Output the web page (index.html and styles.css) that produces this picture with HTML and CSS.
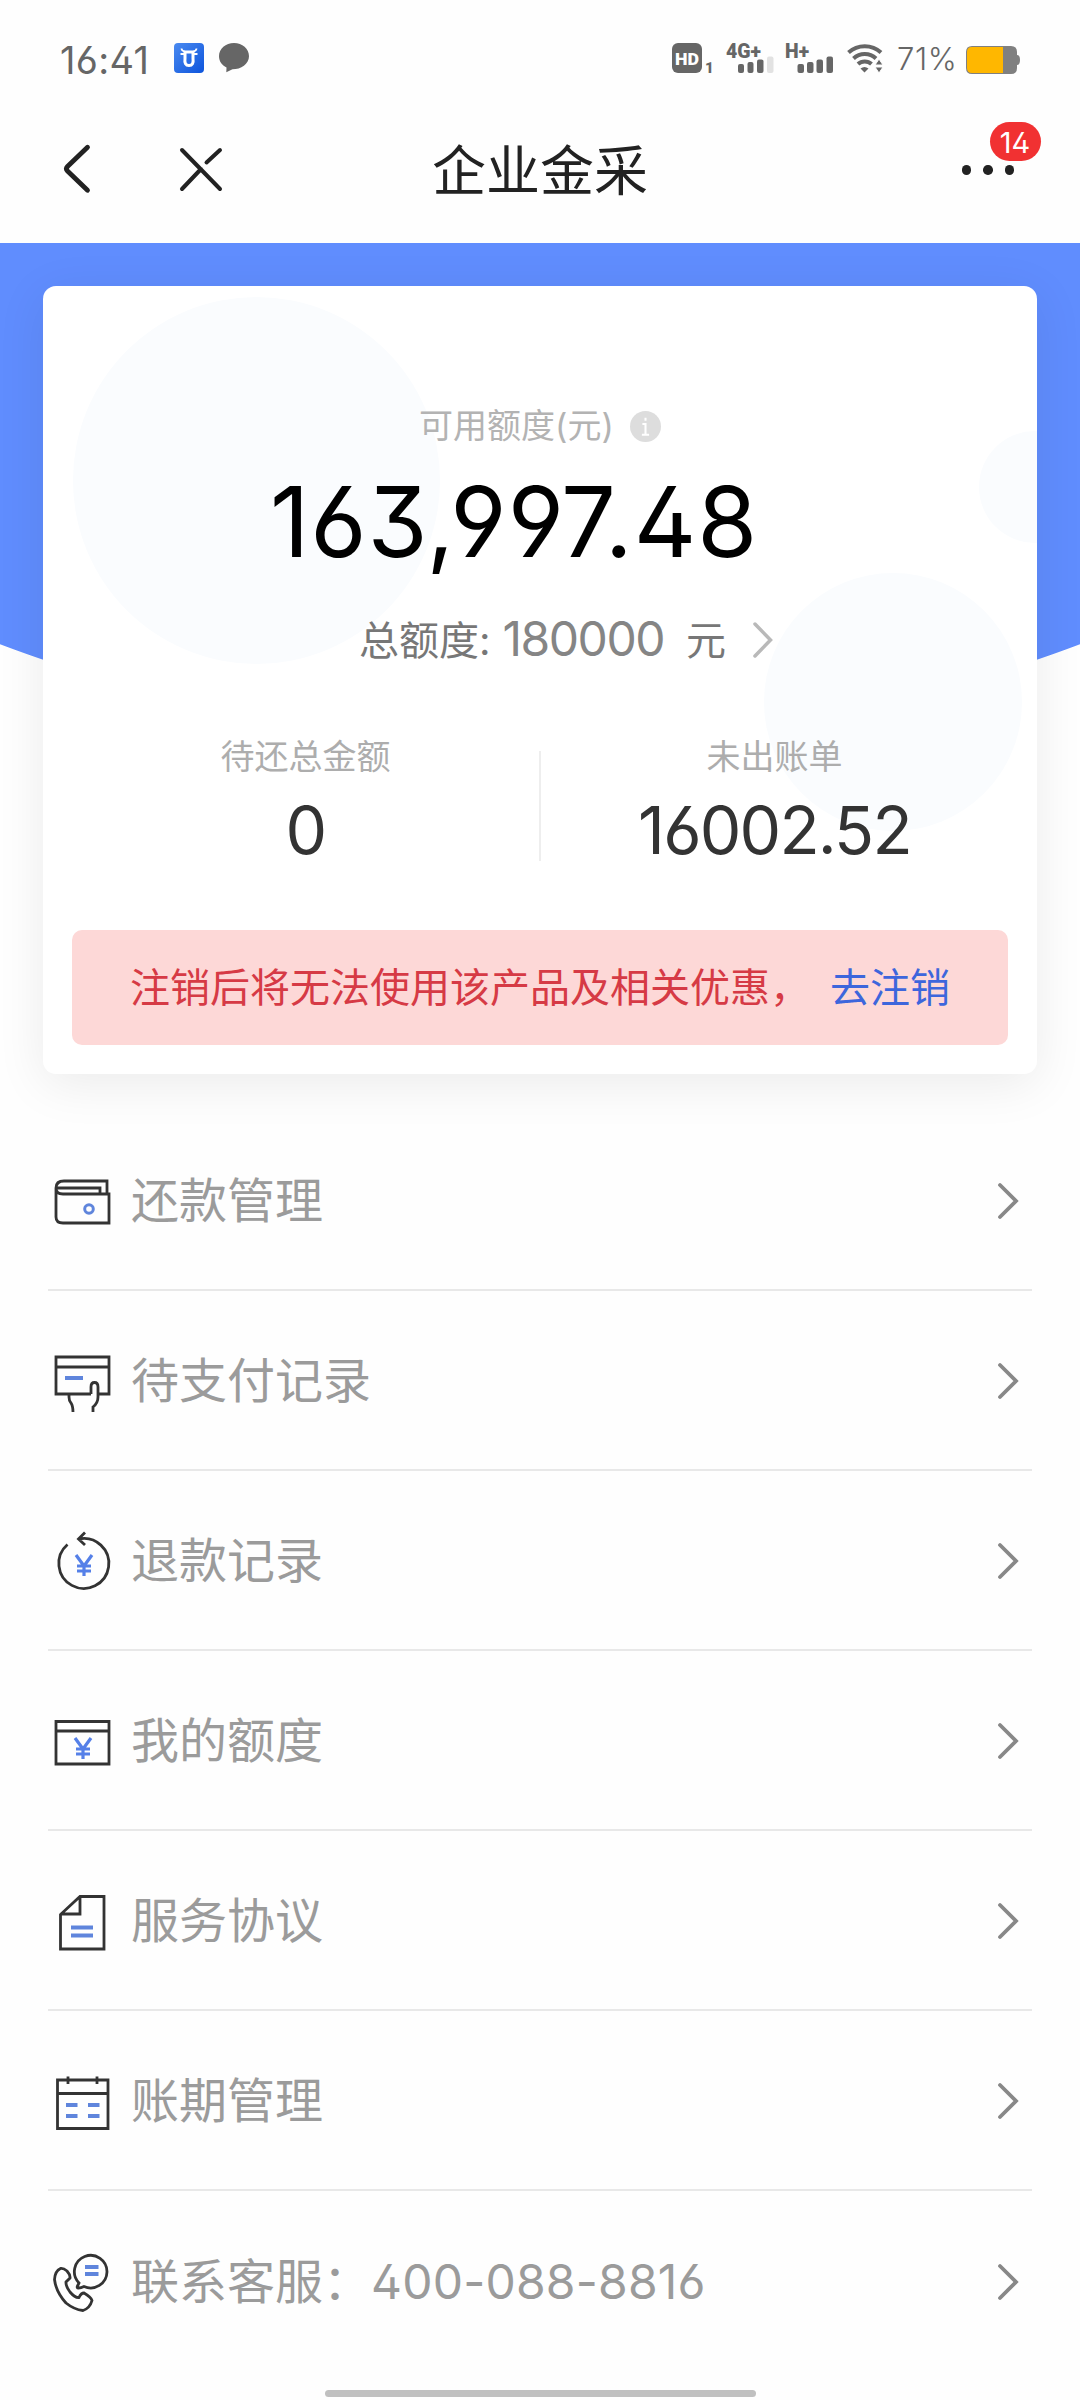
FILE: index.html
```html
<!DOCTYPE html>
<html lang="zh-CN">
<head>
<meta charset="utf-8">
<title>企业金采</title>
<link rel="stylesheet" href="styles.css">
</head>
<body>
<header>
  <div class="status">
    <span class="time">16:41</span>
    <svg class="app" width="30" height="30" viewBox="0 0 30 30">
      <defs><linearGradient id="g" x1="0" y1="0" x2="1" y2="1"><stop offset="0" stop-color="#4a8af0"/><stop offset="1" stop-color="#0d54dc"/></linearGradient></defs>
      <rect width="30" height="30" rx="4" fill="url(#g)"/>
      <path d="M11 9h8v6.500q1 7-4 7t-4-7z" fill="none" stroke="#fff" stroke-width="3"/>
      <path d="M7.500 5.500q.3 2.500 3 3M22.500 5.500q-.3 2.500-3 3M6.500 11h4M23.500 11h-4" stroke="#fff" stroke-width="1.800" fill="none"/>
    </svg>
    <svg class="bubble" width="30" height="30" viewBox="0 0 30 30"><path d="M15 0C6.700 0 0 5.800 0 13.200c0 5 3 9 7.500 11.300L7.300 29.300l6.200-3c8.500 0 16.500-5.300 16.500-13.100C30 5.800 23.300 0 15 0z" fill="#666"/></svg>
    <div class="signals">
      <svg width="41" height="30" viewBox="0 0 41 30"><rect width="30" height="30" rx="6" fill="#666"/><text class="tag" x="3" y="21.500" font-size="17" fill="#fff" textLength="24" lengthAdjust="spacingAndGlyphs">HD</text><text class="tag" x="33" y="29.500" font-size="15" fill="#666">1</text></svg>
      <svg class="g4" width="48" height="30" viewBox="0 0 48 30"><text class="tag" x="0" y="14.500" font-size="20" fill="#666" textLength="35" lengthAdjust="spacingAndGlyphs">4G+</text><g fill="#666"><rect x="12" y="21" width="6" height="9" rx="2"/><rect x="21.500" y="19" width="6" height="11" rx="2"/><rect x="31" y="16.500" width="6.500" height="13.500" rx="2"/><rect x="41" y="13.500" width="6.500" height="16.500" rx="2" fill="#e2e2e2"/></g></svg>
      <svg class="hp" width="48" height="30" viewBox="0 0 48 30"><text class="tag" x="0" y="14.500" font-size="20" fill="#666" textLength="24" lengthAdjust="spacingAndGlyphs">H+</text><g fill="#666"><rect x="12.500" y="21" width="6.500" height="9" rx="2"/><rect x="22" y="19" width="6.500" height="11" rx="2"/><rect x="31.500" y="16.500" width="6.500" height="13.500" rx="2"/><rect x="41.500" y="13.500" width="6.500" height="16.500" rx="2"/></g></svg>
      <svg class="wifi" width="36" height="30" viewBox="0 0 36 30"><g fill="none" stroke="#666" stroke-width="4"><path d="M1.500 9.500a24 24 0 0 1 32.500 0M6.500 15.500a16.500 16.500 0 0 1 22.500 0M11 21a10 10 0 0 1 13.500 0"/></g><path d="M13.500 25.500q4-3 8 0l-4 4z" fill="#666"/><path d="M32 16l4 6h-8zM32 30l4-6h-8z" fill="#666" stroke="#fefefe" stroke-width="1"/></svg>
      <span class="pct">71%</span>
      <svg class="batt" width="54" height="28" viewBox="0 0 54 28"><path d="M6 0h39q6 0 6 6v3q3 0 3 5t-3 5v3q0 6-6 6H6q-6 0-6-6V6q0-6 6-6z" fill="#808080"/><path d="M6 1h31v26H6q-5 0-5-5V6q0-5 5-5z" fill="#ffb700"/></svg>
    </div>
  </div>
  <nav class="nav">
    <svg class="back" width="26" height="50" viewBox="0 0 26 50"><path d="M23.500 3.200L3.500 22.500q-2.200 2.300 0 4.600l20 19.200" fill="none" stroke="#222" stroke-width="4.800" stroke-linecap="round"/></svg>
    <svg class="close" width="44" height="44" viewBox="0 0 44 44"><path d="M3 3l38 39M3 42l19-20M27.500 15.500L41 3" fill="none" stroke="#222" stroke-width="4" stroke-linecap="round"/></svg>
    <h1>企业金采</h1>
    <div class="more"><i></i><i></i><i></i><b>14</b></div>
  </nav>
</header>
<main>
  <section class="hero">
    <div class="card">
      <div class="bubbles"><i class="c1"></i><i class="c2"></i><i class="c3"></i></div>
      <div class="caption"><span>可用额度(元)</span><svg width="31" height="31" viewBox="0 0 30 30"><circle cx="15" cy="15" r="15" fill="#ddd"/><path d="M15 6.500v3M12 12.500h3v10M11.500 23h7" stroke="#fff" stroke-width="2" fill="none"/></svg></div>
      <div class="amount">163,997.48</div>
      <div class="total"><span>总额度:</span><span class="limit">180000</span><span class="unit">元</span><svg width="20" height="36" viewBox="0 0 20 36"><path d="M2 2l15.500 16L2 34" fill="none" stroke="#b9b9b9" stroke-width="3.500" stroke-linecap="round"/></svg></div>
      <div class="split">
        <div><span>待还总金额</span><strong>0</strong></div>
        <div><span>未出账单</span><strong>16002.52</strong></div>
      </div>
      <div class="notice"><span>注销后将无法使用该产品及相关优惠，</span><a>去注销</a></div>
    </div>
  </section>
  <ul class="menu">
    <li><svg class="ico" viewBox="0 0 64 64"><path d="M6 19v29q0 6 7 6h46V25H13q-7 0-7-6 0-7 8-7h43v12M7 19h43v5"/><circle class="blue ring" cx="39" cy="40" r="4.300"/></svg><span>还款管理</span><svg class="arrow" viewBox="0 0 22 38"><path d="M3 3l16 16L3 35"/></svg></li>
    <li><svg class="ico" viewBox="0 0 64 64"><path d="M41 45H6V8h53v37H48M6 18h53M19 45v3q0 4 2 6 2 3 2 9M43 63v-5q5-4 5-10V38q0-4.500-3.500-4.500T41 38v7"/><path class="blue" d="M15 29h18"/></svg><span>待支付记录</span><svg class="arrow" viewBox="0 0 22 38"><path d="M3 3l16 16L3 35"/></svg></li>
    <li><svg class="ico" viewBox="0 0 64 64"><path d="M17.500 15.500a25 25 0 1 0 11-5.500M35 3.500L28.500 10l6.500 6"/><path class="blue yen" d="M26 26l8 11 8-11M34 37v10M27 37h14M27 42h14"/></svg><span>退款记录</span><svg class="arrow" viewBox="0 0 22 38"><path d="M3 3l16 16L3 35"/></svg></li>
    <li><svg class="ico" viewBox="0 0 64 64"><path d="M6 12.500h53V55H6zM6 22h53"/><path class="blue yen" d="M25 29l8 11 8-11M33 40v10M26 40h14M26 45h14"/></svg><span>我的额度</span><svg class="arrow" viewBox="0 0 22 38"><path d="M3 3l16 16L3 35"/></svg></li>
    <li><svg class="ico" viewBox="0 0 64 64"><path d="M30 7.500h24V60H10.500V25.500zv17.500H10.500"/><path class="blue" d="M21 38.500h22M21 46.500h22"/></svg><span>服务协议</span><svg class="arrow" viewBox="0 0 22 38"><path d="M3 3l16 16L3 35"/></svg></li>
    <li><svg class="ico" viewBox="0 0 64 64"><path d="M7.500 11h50.500v48.500H7.500zM7.500 24.500H58M18 7.500v7.500M47 7.500v7.500"/><path class="blue" d="M16 36h11.500M38 36h11.500M16 47h11.500M38 47h11.500"/></svg><span>账期管理</span><svg class="arrow" viewBox="0 0 22 38"><path d="M3 3l16 16L3 35"/></svg></li>
    <li><svg class="ico" viewBox="0 0 64 64"><path d="M28.500 38q-2 0-1-2l1.500-3A16.300 16.300 0 1 1 34 36.500q-3 1.500-5.500 1.500z"/><path d="M10.500 18.500Q5 21 4.500 29.500 6 42 16 53q8 6.500 17 7.500 7-2.500 9-10-.5-3-8-7.500-3 0-5 4.500-4 .5-9-5.500-4.500-6-4-10l4-4q.5-3-3-7-3.500-3-6.500-2.500z"/><path class="blue" d="M35 17h13.500M35 24h13.500"/></svg><span>联系客服：<em>400-088-8816</em></span><svg class="arrow" viewBox="0 0 22 38"><path d="M3 3l16 16L3 35"/></svg></li>
  </ul>
</main>
<footer><div class="home"></div></footer>
</body>
</html>
```
FILE: styles.css
```css
* { box-sizing: border-box; margin: 0; padding: 0; }
body {
  width: 1080px; height: 2400px; overflow: hidden;
  display: flex; flex-direction: column;
  background: #fefefe;
  font-family: Inter, "Noto Sans CJK SC", sans-serif;
  font-feature-settings: "ss01";
}
svg, i, b { display: block; flex: none; overflow: visible; }
i, em { font-style: normal; }
span { white-space: nowrap; }
header { height: 243px; }

.status { height: 116px; padding: 0 60px 0 60px; display: flex; align-items: center; color: #666; }
.time { width: 114px; font-size: 38px; letter-spacing: .3px; line-height: 40px; padding-top: 4px; }
.bubble { margin-left: 15px; }
.signals { margin-left: auto; display: flex; align-items: center; }
.tag { font-family: Roboto, sans-serif; font-weight: 900; }
.g4 { margin-left: 13px; }
.hp { margin-left: 11px; }
.wifi { margin-left: 14px; }
.pct { width: 69px; margin-left: 14px; font-size: 31px; font-weight: 300; line-height: 40px; padding-top: 2px; letter-spacing: .6px; }
.batt { margin-top: 3px; }

.nav { height: 108px; padding: 0 66px 0 64px; display: flex; align-items: center; }
.close { margin-left: 89px; }
.back, .close { margin-bottom: 2px; }
h1 { width: 216px; margin-left: 209px; padding-top: 3px; font-size: 54px; font-weight: 400; line-height: 64px; color: #222; white-space: nowrap; }
.more { position: relative; margin-left: auto; display: flex; gap: 12px; }
.more i { width: 9.500px; height: 9.500px; border-radius: 50%; background: #222; }
.more b {
  position: absolute; left: 28px; top: -43px; width: 51px; height: 39px; border-radius: 20px;
  background: #f13132; color: #fff; font-size: 29px; font-weight: 400; line-height: 41px; text-align: center;
}

.hero {
  height: 866px; padding: 43px 43px 0;
  background: radial-gradient(ellipse 1200px 900px at 540px -402px, #608dfe 99.900%, transparent 100%);
}
.card {
  position: relative; height: 788px; padding: 116px 29px 29px; border-radius: 13px;
  background: #fff; box-shadow: 0 10px 50px rgba(0, 0, 0, .08);
  display: flex; flex-direction: column;
}
.bubbles { position: absolute; inset: 0; overflow: hidden; border-radius: 13px; }
.bubbles i { position: absolute; border-radius: 50%; background: #fafcfe; }
.bubbles .c1 { left: 30px; top: 11px; width: 367px; height: 367px; }
.bubbles .c2 { left: 721px; top: 287px; width: 258px; height: 258px; }
.bubbles .c3 { left: 936px; top: 145px; width: 112px; height: 112px; }
.caption, .amount, .total, .split, .notice { position: relative; display: flex; align-items: center; justify-content: center; }
.caption { height: 48px; gap: 16px; font-size: 34px; color: #b3b3b3; }
.caption span { padding-bottom: 5px; }
.amount { height: 100px; margin-top: 22px; padding-right: 52px; font-size: 97px; font-weight: 400; line-height: 100px; letter-spacing: .9px; color: #000; }
.total { height: 48px; margin-top: 44px; padding-left: 52px; font-size: 40px; color: #777; }
.total span { padding-bottom: 4px; }
.limit { margin-left: 12px; font-size: 48px; letter-spacing: -1.500px; color: #858585; }
.unit { margin: 0 27px 0 22px; }
.split { margin-top: 69px; align-items: stretch; }
.split div { flex: 1; display: flex; flex-direction: column; align-items: center; }
.split div + div { border-left: 2px solid #eee; margin: 18px 0 6px; }
.split div + div span { margin-top: -18px; }
.split span { font-size: 34px; line-height: 48px; color: #adadad; }
.split strong { margin-top: 14px; margin-bottom: -4px; font-size: 66px; font-weight: 400; line-height: 70px; letter-spacing: -1.800px; color: #333; }
.notice { height: 115px; margin-top: auto; padding-bottom: 5px; border-radius: 10px; background: #fdd8d7; font-size: 40px; color: #d63a45; }
.notice a { margin-left: 20px; color: #3d66dc; }

.menu { list-style: none; padding: 0 48px; margin-top: 2px; }
.menu li { height: 180px; display: flex; align-items: center; border-bottom: 2px solid #e8e8e8; padding: 1px 13px 0 2px; font-size: 48px; color: #9b9b9b; }
.menu li:last-child { border-bottom: 0; }
.menu span { margin-left: 17px; padding-bottom: 8px; }
.menu em { letter-spacing: .2px; }
.ico { width: 64px; height: 64px; fill: none; stroke: #333; stroke-width: 2.800; }
.ico .blue { stroke: #5f85dc; stroke-width: 4; }
.ico .ring { stroke-width: 3; }
.ico .yen { stroke: #5580e8; stroke-width: 3.200; }
.arrow { width: 22px; height: 38px; margin-left: auto; fill: none; stroke: #888; stroke-width: 3.800; stroke-linecap: round; }
footer { height: 20px; margin-top: auto; display: flex; justify-content: center; padding-top: 10px; }
.home { width: 431px; height: 7px; border-radius: 4px; background: #c0c0c0; }
```
